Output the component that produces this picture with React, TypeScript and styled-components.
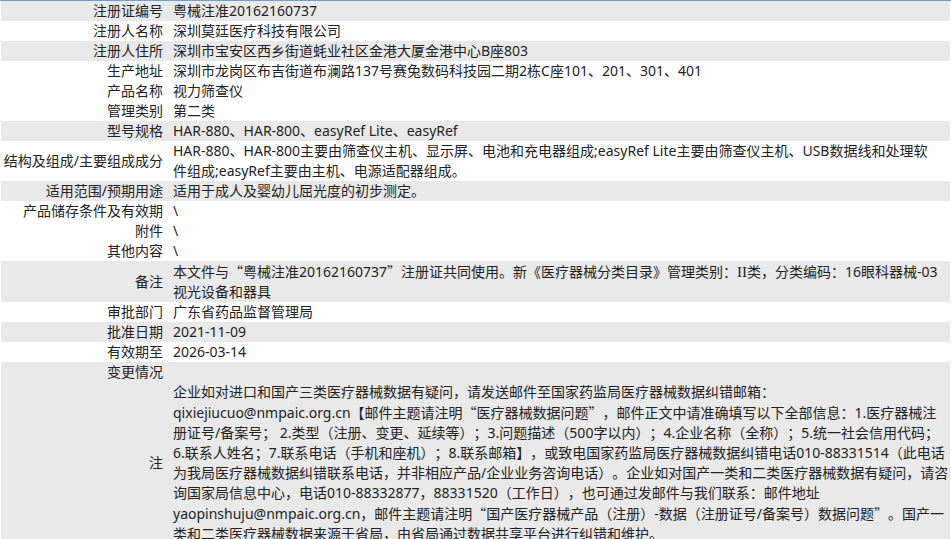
import React from "react";
import styled, { createGlobalStyle } from "styled-components";

const GlobalStyle = createGlobalStyle`
  html, body {
    margin: 0;
    padding: 0;
    background: #ffffff;
  }
  body {
    font-family: "Noto Sans", "Noto Sans CJK SC", sans-serif;
    font-size: 14px;
    color: #222222;
    text-spacing-trim: space-all;
  }
`;

const Page = styled.div`
  border-top: 1px solid #6a9fd6;
  padding: 0 1px;
`;

const Table = styled.table`
  width: 100%;
  border-collapse: collapse;
  table-layout: fixed;
`;

const Row = styled.tr<{ $shade?: boolean }>`
  background: ${(p) => (p.$shade ? "#e9e9e9" : "#ffffff")};
`;

const Label = styled.th`
  width: 162px;
  padding: 0 4px 0 0;
  text-align: right;
  font-weight: normal;
  white-space: nowrap;
  vertical-align: middle;
  line-height: 20px;
`;

const Value = styled.td`
  padding: 0 2px 0 6px;
  text-align: left;
  vertical-align: middle;
  line-height: 20px;
`;

const Line = styled.span`
  display: block;
  white-space: nowrap;
  min-height: 20px;
`;

const WidePunct = styled.span`
  font-family: "Noto Sans CJK SC", sans-serif;
`;

const Roman = styled.span`
  font-family: "Liberation Serif", serif;
  font-size: 15px;
`;

function RichText({ text }: { text: string }) {
  const parts = text.split(/([“”Ⅱ])/);
  return (
    <>
      {parts.map((p, i) => {
        if (!p) return null;
        if (p === "“" || p === "”") return <WidePunct key={i}>{p}</WidePunct>;
        if (p === "Ⅱ") return <Roman key={i}>II</Roman>;
        return <React.Fragment key={i}>{p}</React.Fragment>;
      })}
    </>
  );
}

type Item = { label: string; lines: string[]; shade?: boolean };

const items: Item[] = [
  { label: "注册证编号", lines: ["粤械注准20162160737"], shade: true },
  { label: "注册人名称", lines: ["深圳莫廷医疗科技有限公司"] },
  { label: "注册人住所", lines: ["深圳市宝安区西乡街道蚝业社区金港大厦金港中心B座803"], shade: true },
  { label: "生产地址", lines: ["深圳市龙岗区布吉街道布澜路137号赛兔数码科技园二期2栋C座101、201、301、401"] },
  { label: "产品名称", lines: ["视力筛查仪"] },
  { label: "管理类别", lines: ["第二类"] },
  { label: "型号规格", lines: ["HAR-880、HAR-800、easyRef Lite、easyRef"], shade: true },
  {
    label: "结构及组成/主要组成成分",
    lines: [
      "HAR-880、HAR-800主要由筛查仪主机、显示屏、电池和充电器组成;easyRef Lite主要由筛查仪主机、USB数据线和处理软",
      "件组成;easyRef主要由主机、电源适配器组成。",
    ],
  },
  { label: "适用范围/预期用途", lines: ["适用于成人及婴幼儿屈光度的初步测定。"], shade: true },
  { label: "产品储存条件及有效期", lines: ["\\"] },
  { label: "附件", lines: ["\\"] },
  { label: "其他内容", lines: ["\\"] },
  {
    label: "备注",
    lines: [
      "本文件与“粤械注准20162160737”注册证共同使用。新《医疗器械分类目录》管理类别：Ⅱ类，分类编码：16眼科器械-03",
      "视光设备和器具",
    ],
    shade: true,
  },
  { label: "审批部门", lines: ["广东省药品监督管理局"] },
  { label: "批准日期", lines: ["2021-11-09"], shade: true },
  { label: "有效期至", lines: ["2026-03-14"] },
  { label: "变更情况", lines: [""], shade: true },
  {
    label: "注",
    lines: [
      "企业如对进口和国产三类医疗器械数据有疑问，请发送邮件至国家药监局医疗器械数据纠错邮箱：",
      "qixiejiucuo@nmpaic.org.cn【邮件主题请注明“医疗器械数据问题”，邮件正文中请准确填写以下全部信息：1.医疗器械注",
      "册证号/备案号； 2.类型（注册、变更、延续等）；3.问题描述（500字以内）；4.企业名称（全称）；5.统一社会信用代码；",
      "6.联系人姓名；7.联系电话（手机和座机）；8.联系邮箱】，或致电国家药监局医疗器械数据纠错电话010-88331514（此电话",
      "为我局医疗器械数据纠错联系电话，并非相应产品/企业业务咨询电话）。企业如对国产一类和二类医疗器械数据有疑问，请咨",
      "询国家局信息中心，电话010-88332877，88331520（工作日），也可通过发邮件与我们联系：邮件地址",
      "yaopinshuju@nmpaic.org.cn，邮件主题请注明“国产医疗器械产品（注册）-数据（注册证号/备案号）数据问题”。国产一",
      "类和二类医疗器械数据来源于省局，由省局通过数据共享平台进行纠错和维护。",
    ],
    shade: true,
  },
];

export default function App() {
  return (
    <>
      <GlobalStyle />
      <Page>
        <Table>
          <tbody>
            {items.map((it) => (
              <Row key={it.label} $shade={it.shade}>
                <Label>{it.label}</Label>
                <Value>
                  {it.lines.map((ln, i) => (
                    <Line key={i}>
                      <RichText text={ln} />
                    </Line>
                  ))}
                </Value>
              </Row>
            ))}
          </tbody>
        </Table>
      </Page>
    </>
  );
}
